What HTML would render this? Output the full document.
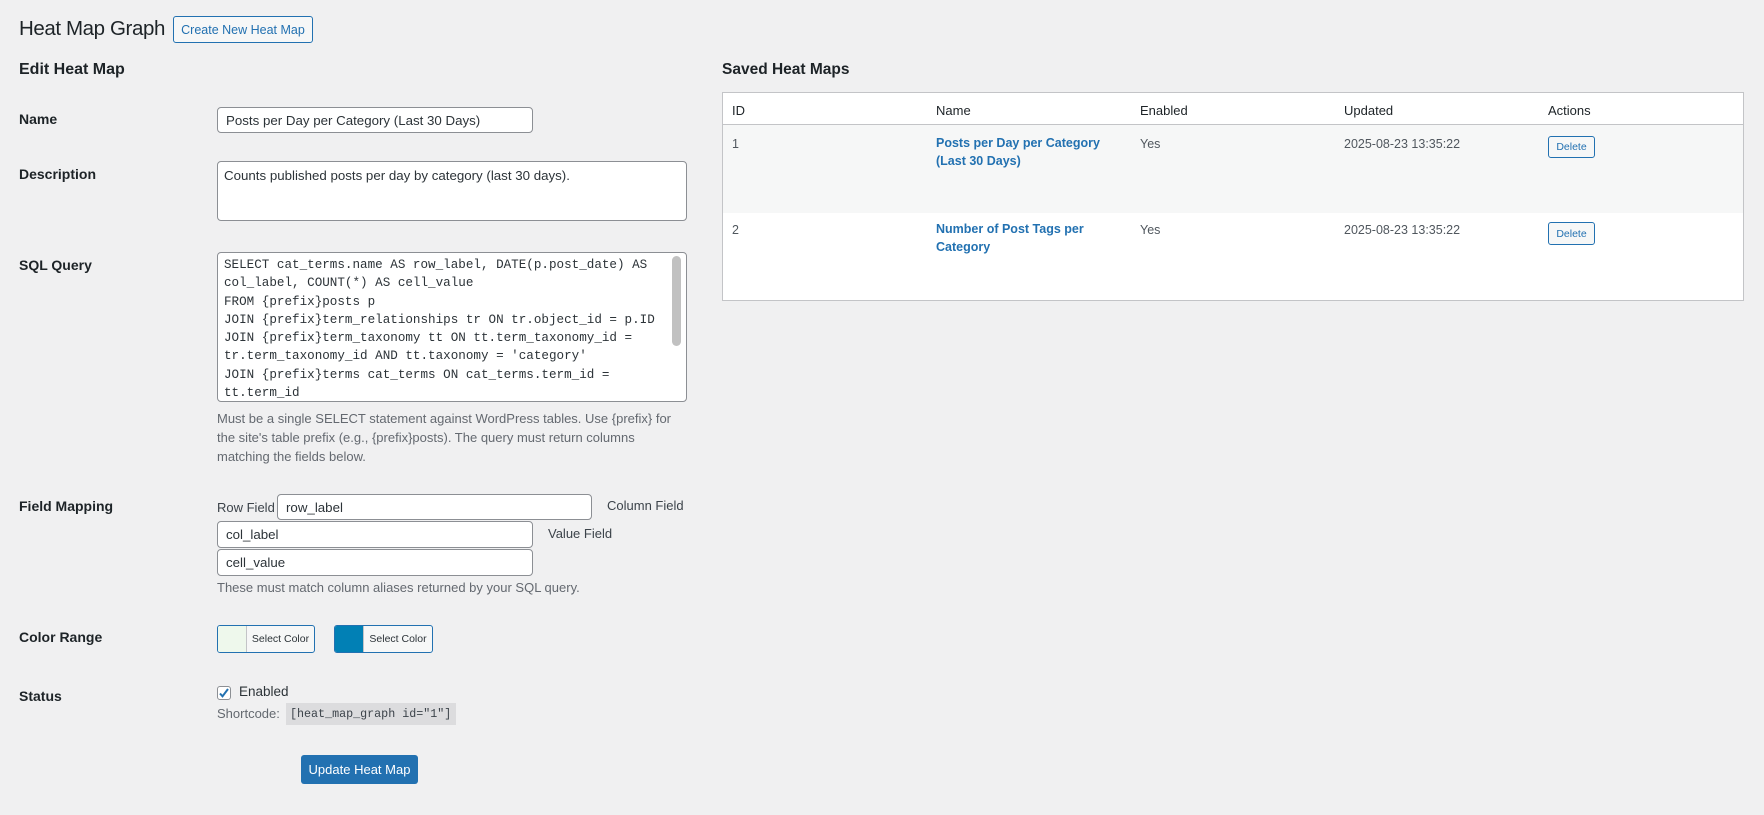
<!DOCTYPE html>
<html><head><meta charset="utf-8"><style>
body{margin:0;width:1764px;height:815px;background:#f0f0f1;font-family:"Liberation Sans",Arial,sans-serif;color:#1d2327;position:relative;overflow:hidden}
.a{position:absolute;white-space:nowrap}
.lbl{font-size:14px;font-weight:bold;color:#1d2327}
.inp{position:absolute;background:#fff;border:1px solid #8c8f94;border-radius:4px;box-sizing:border-box;font-size:13.3px;padding-left:8px;display:flex;align-items:center;color:#2c3338}
.help{font-size:13px;color:#646970;line-height:19px}
.mono{font-family:"Liberation Mono","DejaVu Sans Mono",monospace}
.th{font-size:13px;color:#1d2327}
.td{font-size:12.5px;color:#50575e}
.lk{font-size:12.5px;font-weight:bold;color:#2271b1;line-height:17.5px;white-space:normal}
.del{position:absolute;border:1px solid #2271b1;border-radius:3px;background:#f6f7f7;color:#2271b1;font-size:10.5px;display:flex;align-items:center;justify-content:center;box-sizing:border-box}
</style></head><body>
<div class="a" style="left:19px;top:17px;font-size:20.5px;color:#1d2327;letter-spacing:-0.4px">Heat Map Graph</div>
<div class="a" style="left:173px;top:16px;width:140px;height:27px;border:1px solid #2271b1;border-radius:3px;box-sizing:border-box;background:#f6f7f7;color:#2271b1;font-size:12.5px;display:flex;align-items:center;justify-content:center">Create New Heat Map</div>
<div class="a" style="left:19px;top:61px;font-size:16px;font-weight:bold">Edit Heat Map</div>

<div class="a lbl" style="left:19px;top:111px">Name</div>
<div class="inp" style="left:217px;top:107px;width:316px;height:26px">Posts per Day per Category (Last 30 Days)</div>

<div class="a lbl" style="left:19px;top:166px">Description</div>
<div class="inp" style="left:217px;top:161px;width:470px;height:60px;align-items:flex-start;padding-top:6px;padding-left:6px">Counts published posts per day by category (last 30 days).</div>

<div class="a lbl" style="left:19px;top:257px">SQL Query</div>
<div class="inp mono" style="left:217px;top:252px;width:470px;height:150px;align-items:flex-start;padding-top:3px;padding-left:6px;font-size:12.6px;line-height:18.3px;white-space:pre;overflow:hidden">SELECT cat_terms.name AS row_label, DATE(p.post_date) AS
col_label, COUNT(*) AS cell_value
FROM {prefix}posts p
JOIN {prefix}term_relationships tr ON tr.object_id = p.ID
JOIN {prefix}term_taxonomy tt ON tt.term_taxonomy_id =
tr.term_taxonomy_id AND tt.taxonomy = 'category'
JOIN {prefix}terms cat_terms ON cat_terms.term_id =
tt.term_id</div>
<div class="a" style="left:672px;top:256px;width:9px;height:90px;background:#c1c1c1;border-radius:5px"></div>
<div class="a help" style="left:217px;top:409px;white-space:normal;width:470px">Must be a single SELECT statement against WordPress tables. Use {prefix} for the site's table prefix (e.g., {prefix}posts). The query must return columns matching the fields below.</div>

<div class="a lbl" style="left:19px;top:498px">Field Mapping</div>
<div class="a" style="left:217px;top:500px;font-size:13px;color:#3c434a">Row Field</div>
<div class="inp" style="left:277px;top:494px;width:315px;height:26px">row_label</div>
<div class="a" style="left:607px;top:498px;font-size:13px;color:#3c434a">Column Field</div>
<div class="inp" style="left:217px;top:521px;width:316px;height:27px">col_label</div>
<div class="a" style="left:548px;top:526px;font-size:13px;color:#3c434a">Value Field</div>
<div class="inp" style="left:217px;top:549px;width:316px;height:27px">cell_value</div>
<div class="a help" style="left:217px;top:578px">These must match column aliases returned by your SQL query.</div>

<div class="a lbl" style="left:19px;top:629px">Color Range</div>
<div class="a" style="left:217px;top:625px;width:98px;height:28px;border:1px solid #2271b1;border-radius:3px;box-sizing:border-box;background:#f6f7f7;overflow:hidden;display:flex">
<div style="width:28px;background:#eef8ec;border-right:1px solid #c3c4c7"></div><div style="flex:1;font-size:10.5px;color:#2c3338;display:flex;align-items:center;justify-content:center">Select Color</div></div>
<div class="a" style="left:334px;top:625px;width:99px;height:28px;border:1px solid #2271b1;border-radius:3px;box-sizing:border-box;background:#f6f7f7;overflow:hidden;display:flex">
<div style="width:28px;background:#0180b5;border-right:1px solid #c3c4c7"></div><div style="flex:1;font-size:10.5px;color:#2c3338;display:flex;align-items:center;justify-content:center">Select Color</div></div>

<div class="a lbl" style="left:19px;top:688px">Status</div>
<div class="a" style="left:217px;top:686px;width:14px;height:14px;border:1px solid #8c8f94;border-radius:3px;background:#fff;box-sizing:border-box">
<svg width="14" height="14" viewBox="0 0 14 14" style="position:absolute;left:-1px;top:-1px"><path d="M3 7.5l2.5 2.8L11 3" stroke="#2271b1" stroke-width="2" fill="none"/></svg></div>
<div class="a" style="left:239px;top:684px;font-size:13.5px;color:#2c3338">Enabled</div>
<div class="a" style="left:217px;top:706px;font-size:13px;color:#646970">Shortcode:</div>
<div class="a mono" style="left:286px;top:703px;width:170px;height:22px;background:#dcdcde;font-size:11.7px;color:#3c434a;display:flex;align-items:center;padding-left:4px;box-sizing:border-box">[heat_map_graph id="1"]</div>

<div class="a" style="left:301px;top:755px;width:117px;height:29px;background:#2271b1;border-radius:3px;color:#fff;font-size:13px;display:flex;align-items:center;justify-content:center">Update Heat Map</div>

<div class="a" style="left:722px;top:61px;font-size:15.5px;font-weight:bold">Saved Heat Maps</div>
<div class="a" style="left:722px;top:92px;width:1022px;height:209px;background:#fff;border:1px solid #c3c4c7;box-sizing:border-box"></div>
<div class="a" style="left:723px;top:124px;width:1020px;height:1px;background:#c3c4c7"></div>
<div class="a" style="left:723px;top:125px;width:1020px;height:88px;background:#f6f7f7"></div>
<div class="a th" style="left:732px;top:103px">ID</div>
<div class="a th" style="left:936px;top:103px">Name</div>
<div class="a th" style="left:1140px;top:103px">Enabled</div>
<div class="a th" style="left:1344px;top:103px">Updated</div>
<div class="a th" style="left:1548px;top:103px">Actions</div>

<div class="a td" style="left:732px;top:137px">1</div>
<div class="a lk" style="left:936px;top:135px;width:180px">Posts per Day per Category (Last 30 Days)</div>
<div class="a td" style="left:1140px;top:137px">Yes</div>
<div class="a td" style="left:1344px;top:137px">2025-08-23 13:35:22</div>
<div class="del" style="left:1548px;top:136px;width:47px;height:22px">Delete</div>

<div class="a td" style="left:732px;top:223px">2</div>
<div class="a lk" style="left:936px;top:221px;width:160px">Number of Post Tags per Category</div>
<div class="a td" style="left:1140px;top:223px">Yes</div>
<div class="a td" style="left:1344px;top:223px">2025-08-23 13:35:22</div>
<div class="del" style="left:1548px;top:222px;width:47px;height:23px">Delete</div>
</body></html>
